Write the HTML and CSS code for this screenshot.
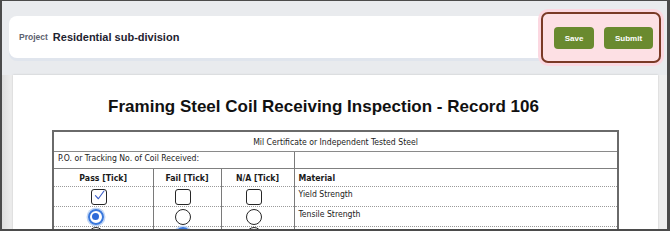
FILE: index.html
```html
<!DOCTYPE html>
<html>
<head>
<meta charset="utf-8">
<link rel="stylesheet" href="styles.css">
</head>
<body>
<div class="frame">
  <div class="topbar">
    <div class="card">
      <span class="label">Project</span>
      <span class="project">Residential sub-division</span>
      <div class="highlight">
        <button class="btn btn-save">Save</button>
        <button class="btn btn-submit">Submit</button>
      </div>
    </div>
  </div>
  <div class="viewer">
    <div class="page">
      <h1 class="title">Framing Steel Coil Receiving Inspection - Record 106</h1>
      <table class="form">
        <colgroup>
          <col class="c1"><col class="c2"><col class="c3"><col class="c4">
        </colgroup>
        <tr class="r1"><td colspan="4" class="center">Mil Certificate or Independent Tested Steel</td></tr>
        <tr class="r2"><td colspan="3">P.O. or Tracking No. of Coil Received:</td><td></td></tr>
        <tr class="r3 dotted"><th>Pass [Tick]</th><th>Fail [Tick]</th><th>N/A [Tick]</th><th class="left">Material</th></tr>
        <tr class="r4 dotted">
          <td class="ctl"><span class="box checked"><svg viewBox="0 0 16 16" width="13" height="13"><path d="M3 8.2 L6.6 12 L13.5 2.5" fill="none" stroke="#3d5fc8" stroke-width="1.4" stroke-linecap="round" stroke-linejoin="round"/></svg></span></td>
          <td class="ctl"><span class="box"></span></td>
          <td class="ctl"><span class="box"></span></td>
          <td class="txt">Yield Strength</td>
        </tr>
        <tr class="r5 dotted">
          <td class="ctl"><span class="radio on shift"></span></td>
          <td class="ctl"><span class="radio"></span></td>
          <td class="ctl"><span class="radio"></span></td>
          <td class="txt">Tensile Strength</td>
        </tr>
        <tr class="r6">
          <td class="ctl"><span class="radio shift"></span></td>
          <td class="ctl"><span class="radio on"></span></td>
          <td class="ctl"><span class="radio"></span></td>
          <td class="txt">Galvanized Coating</td>
        </tr>
      </table>
    </div>
  </div>
</div>
</body>
</html>
```
FILE: styles.css
```css
html, body {
  margin: 0;
  padding: 0;
}
body {
  width: 670px;
  height: 231px;
  overflow: hidden;
  font-family: "Liberation Sans", Arial, sans-serif;
}
.frame {
  width: 670px;
  height: 231px;
  box-sizing: border-box;
  border-style: solid;
  border-color: #4b4b4b;
  border-width: 1px 3px 2px 2px;
  background: #e9ebee;
  display: flex;
  flex-direction: column;
  overflow: hidden;
}
.topbar {
  padding: 15px 3px 0 7px;
}
.card {
  position: relative;
  height: 42px;
  background: #ffffff;
  border-radius: 8px;
  box-shadow: 0 3px 0 #e0e5ed;
  display: flex;
  align-items: center;
  gap: 5px;
  padding-left: 10px;
}
.label {
  font-size: 8.5px;
  font-weight: bold;
  color: #5d6270;
}
.project {
  font-size: 11px;
  font-weight: bold;
  color: #1e2330;
}
.highlight {
  position: absolute;
  right: 3px;
  top: -4px;
  width: 120px;
  height: 51px;
  box-sizing: border-box;
  border: 2px solid #7a3a26;
  border-radius: 7px;
  background: #fde0e4;
  box-shadow: 0 0 0 3px #fcd8e1;
  display: flex;
  align-items: center;
  gap: 10px;
  padding-left: 11px;
  padding-top: 1px;
}
.btn {
  height: 22px;
  border: none;
  border-radius: 4px;
  background: #6a8a2f;
  color: #ffffff;
  font-family: "Liberation Sans", Arial, sans-serif;
  font-size: 8px;
  font-weight: bold;
  padding: 0;
}
.btn-save { width: 40px; }
.btn-submit { width: 49px; }

.viewer {
  flex: 1;
  margin-top: 17px;
  background: linear-gradient(to right, #dedede 0, #efefef 11px, #efefef 100%);
  padding-left: 11px;
  padding-right: 9px;
  display: flex;
}
.page {
  flex: 1;
  background: #ffffff;
  box-shadow: 0 0 2px rgba(0,0,0,0.18);
  padding-top: 22px;
}
.title {
  margin: 0 24px 0 0;
  font-size: 17px;
  line-height: 20px;
  font-weight: bold;
  color: #111111;
  text-align: center;
}
.form {
  margin: 13px 0 0 39px;
  width: 567px;
  border-collapse: collapse;
  border: 2px solid #6a6a6a;
  table-layout: fixed;
  font-family: "DejaVu Sans", Tahoma, sans-serif;
  font-stretch: condensed;
  font-size: 8.6px;
  color: #222222;
}
.c1 { width: 100px; }
.c2 { width: 68px; }
.c3 { width: 73px; }
.c4 { width: auto; }
.form td, .form th {
  padding: 0 4px;
  border-left: 1px solid #7a7a7a;
  border-right: 1px solid #7a7a7a;
}
.r1 td {
  height: 19px;
  border-bottom: 1px solid #8a8a8a;
}
.r2 td {
  height: 15px;
  border-bottom: 1px solid #808080;
  vertical-align: top;
  padding-top: 1px;
  padding-bottom: 0;
}
.r3 th {
  height: 17px;
  font-weight: bold;
  font-size: 8.7px;
  color: #1a1a1a;
}
.dotted td, .dotted th {
  border-bottom: 1px dotted #9a9a9a;
}
.r4 td { height: 17px; }
.r5 td { height: 17px; }
.r6 td { height: 17px; vertical-align: top; padding-top: 2px; }
.txt {
  vertical-align: top;
  padding-top: 2px !important;
}
.ctl {
  text-align: center;
  padding: 0 12px 0 4px !important;
  line-height: 0;
}
.center { text-align: center; }
.left { text-align: left; }

.box {
  display: inline-block;
  width: 16px;
  height: 16px;
  box-sizing: border-box;
  border: 1.7px solid #262626;
  border-radius: 3px;
  vertical-align: middle;
  position: relative;
}
.box.checked svg {
  position: absolute;
  left: 0.5px;
  top: -0.5px;
}
.radio {
  display: inline-block;
  box-sizing: border-box;
  width: 16px;
  height: 16px;
  border: 1.5px solid #262626;
  border-radius: 50%;
  vertical-align: middle;
  position: relative;
}
.radio.on {
  border: 2px solid #3a78dc;
  box-shadow: 0 0 0 1.5px #c2d7f6;
}
.radio.on::after {
  content: "";
  position: absolute;
  left: 2.5px;
  top: 2.5px;
  width: 7px;
  height: 7px;
  border-radius: 50%;
  background: #2d6ad8;
}
.shift { margin-right: 7px; }
```
